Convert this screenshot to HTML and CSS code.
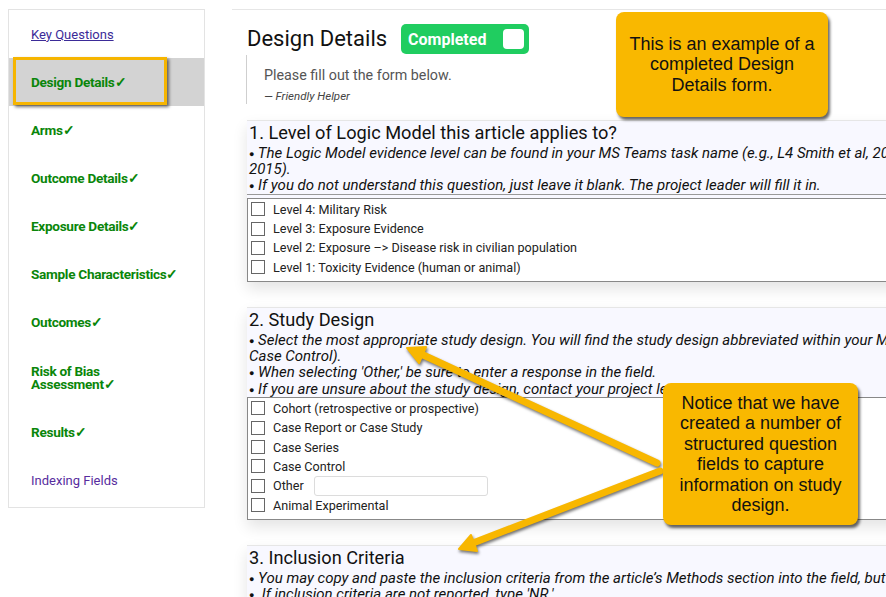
FILE: index.html
```html
<!DOCTYPE html>
<html lang="en">
<head>
<meta charset="utf-8">
<title>Design Details</title>
<link rel="stylesheet" href="styles.css">
</head>
<body>
<div class="page">
  <nav class="sidebar">
    <a class="nav-item nav-link" href="#">Key Questions</a>
    <a class="nav-item nav-done nav-active" href="#">Design Details✓</a>
    <a class="nav-item nav-done" href="#">Arms✓</a>
    <a class="nav-item nav-done" href="#">Outcome Details✓</a>
    <a class="nav-item nav-done" href="#">Exposure Details✓</a>
    <a class="nav-item nav-done" href="#">Sample Characteristics✓</a>
    <a class="nav-item nav-done" href="#">Outcomes✓</a>
    <a class="nav-item nav-done nav-two-line" href="#">Risk of Bias Assessment✓</a>
    <a class="nav-item nav-done" href="#">Results✓</a>
    <a class="nav-item nav-plain" href="#">Indexing Fields</a>
  </nav>

  <main class="main">
    <div class="title-row">
      <h1 class="title">Design Details</h1>
      <div class="badge">Completed<span class="badge-box"></span></div>
    </div>
    <blockquote class="helper">
      <p class="helper-text">Please fill out the form below.</p>
      <p class="helper-cite">— Friendly Helper</p>
    </blockquote>

    <section class="q">
      <div class="q-head q-head--ruled">
        <h2 class="q-title">1. Level of Logic Model this article applies to?</h2>
        <p class="q-note"><span class="dot">●</span> The Logic Model evidence level can be found in your MS Teams task name (e.g., L4 Smith et al, 2015 or L2 Jones et al,<br>2015).</p>
        <p class="q-note"><span class="dot">●</span> If you do not understand this question, just leave it blank. The project leader will fill it in.</p>
      </div>
      <div class="q-opts q-opts--gap">
        <label class="opt"><span class="cb"></span>Level 4: Military Risk</label>
        <label class="opt"><span class="cb"></span>Level 3: Exposure Evidence</label>
        <label class="opt"><span class="cb"></span>Level 2: Exposure –&gt; Disease risk in civilian population</label>
        <label class="opt"><span class="cb"></span>Level 1: Toxicity Evidence (human or animal)</label>
      </div>
    </section>

    <section class="q">
      <div class="q-head">
        <h2 class="q-title">2. Study Design</h2>
        <p class="q-note"><span class="dot">●</span> Select the most appropriate study design. You will find the study design abbreviated within your MS Teams task name (e.g., Cohort or<br>Case Control).</p>
        <p class="q-note"><span class="dot">●</span> When selecting 'Other,' be sure to enter a response in the field.</p>
        <p class="q-note"><span class="dot">●</span> If you are unsure about the study design, contact your project leader.</p>
      </div>
      <div class="q-opts">
        <label class="opt"><span class="cb"></span>Cohort (retrospective or prospective)</label>
        <label class="opt"><span class="cb"></span>Case Report or Case Study</label>
        <label class="opt"><span class="cb"></span>Case Series</label>
        <label class="opt"><span class="cb"></span>Case Control</label>
        <label class="opt"><span class="cb"></span>Other<span class="other-input"></span></label>
        <label class="opt"><span class="cb"></span>Animal Experimental</label>
      </div>
    </section>

    <section class="q">
      <div class="q-head">
        <h2 class="q-title">3. Inclusion Criteria</h2>
        <p class="q-note"><span class="dot">●</span> You may copy and paste the inclusion criteria from the article’s Methods section into the field, but please shorten where possible.</p>
        <p class="q-note"><span class="dot">●</span>&nbsp; If inclusion criteria are not reported, type 'NR.'</p>
      </div>
    </section>
  </main>
</div>

<svg class="arrows" width="886" height="597" viewBox="0 0 886 597" aria-hidden="true">
  <g class="arrow-group">
    <path d="M657 463 L421 354" class="arrow-line"/>
    <polygon points="407,348 426,347 419,363" class="arrow-head"/>
    <path d="M660 471 L473 543" class="arrow-line"/>
    <polygon points="459,549 471,535 477,551" class="arrow-head"/>
  </g>
</svg>

<div class="callout callout-1">This is an example of a completed Design Details form.</div>
<div class="callout callout-2">Notice that we have created a number of structured question fields to capture information on study design.</div>
</body>
</html>
```

FILE: styles.css
```css
html, body {
  margin: 0;
  padding: 0;
  overflow: hidden;
  width: 886px;
  height: 597px;
  background: #ffffff;
  font-family: Roboto, "Liberation Sans", Arial, sans-serif;
  color: #111;
}

.page {
  display: flex;
  align-items: flex-start;
  gap: 27px;
  padding: 9px 0 0 8px;
  width: 1200px;
}

/* Sidebar */
.sidebar {
  flex: 0 0 197px;
  box-sizing: border-box;
  border: 1px solid #e3e3e3;
  background: #fff;
  display: flex;
  flex-direction: column;
  padding-bottom: 2px;
}

.nav-item {
  display: block;
  padding: 17.5px 22px 17.5px 22px;
  font-size: 13px;
  line-height: 13px;
  height: 13px;
  text-decoration: none;
}

.nav-link {
  color: #3b2b98;
  text-decoration: underline;
}

.nav-plain {
  color: #572d9e;
}

.nav-done {
  color: #0a860a;
  font-weight: 700;
  font-size: 13.6px;
  letter-spacing: -0.3px;
}

.nav-two-line {
  padding-top: 19px;
  height: 26px;
  line-height: 12.5px;
}

.nav-active {
  background: #d3d3d3;
  position: relative;
}

.nav-active::after {
  content: "";
  position: absolute;
  left: 4px;
  top: -1px;
  width: 154px;
  height: 48px;
  box-sizing: border-box;
  border: 3px solid #f6b500;
  box-shadow: 2px 2px 3px rgba(0, 0, 0, 0.55);
}

/* Main */
.main {
  flex: 0 0 900px;
  border-top: 1px solid #e6e6e6;
  padding-left: 15px;
  box-sizing: border-box;
  display: flex;
  flex-direction: column;
}

.title-row {
  display: flex;
  align-items: center;
  gap: 14px;
  margin-top: 14px;
  height: 30px;
}

.title {
  margin: 0;
  font-size: 22px;
  font-weight: 400;
  line-height: 30px;
  color: #111;
}

.badge {
  display: flex;
  align-items: center;
  height: 30px;
  box-sizing: border-box;
  padding: 0 5px 0 7px;
  border-radius: 5px;
  background: #20cd60;
  color: #fff;
  font-size: 16px;
  font-weight: 700;
  gap: 15px;
  width: 128px;
}

.badge-box {
  width: 21px;
  height: 20px;
  background: #fff;
  border-radius: 4px;
  margin-left: auto;
}

.helper {
  margin: 1px 0 0 -1px;
  border-left: 1px solid #cfcfcf;
  padding: 10px 0 0 17px;
  height: 49px;
  box-sizing: border-box;
}

.helper-text {
  margin: 0;
  font-size: 14.3px;
  line-height: 20px;
  color: #555;
}

.helper-cite {
  margin: 3px 0 0;
  font-size: 11.5px;
  line-height: 16px;
  font-style: italic;
  color: #444;
}

/* Question sections */
.q {
  margin-top: 16px;
  border-top: 1px solid #e6e6e6;
  background: #f8f8ff;
  box-shadow: 0 7px 14px rgba(0, 0, 0, 0.11);
}

.q + .q {
  margin-top: 25px;
}

.q-head {
  padding: 0 2px;
}

.q-head--ruled {
  border-bottom: 1px solid #999;
}

.q-title {
  margin: 0;
  font-size: 18.2px;
  font-weight: 400;
  line-height: 24px;
  color: #111;
}

.q-note {
  margin: 0;
  font-size: 15px;
  line-height: 16.2px;
  font-style: italic;
  color: #111;
  white-space: nowrap;
}

.dot {
  font-style: normal;
  font-size: 9px;
  line-height: 0;
  position: relative;
  top: -1px;
}

.q-opts {
  background: #fff;
  border: 1px solid #888;
  padding: 1px 0 4px 3px;
  display: flex;
  flex-direction: column;
}

.q-opts--gap {
  margin-top: 3px;
}

.opt {
  display: flex;
  align-items: center;
  height: 19.33px;
  font-size: 12.6px;
  color: #222;
}

.cb {
  width: 12px;
  height: 12px;
  border: 1px solid #666;
  background: #fff;
  margin-right: 8px;
  flex: 0 0 auto;
}

.other-input {
  width: 174px;
  height: 20px;
  box-sizing: border-box;
  border: 1px solid #dcdcdc;
  border-radius: 3px;
  background: #fff;
  margin-left: 10px;
}

/* Overlays */
.arrows {
  position: absolute;
  left: 0;
  top: 0;
  pointer-events: none;
}

.arrow-group {
  filter: drop-shadow(1.5px 2px 1.5px rgba(0, 0, 0, 0.55));
}

.arrow-line {
  stroke: #f8b700;
  stroke-width: 7;
  stroke-linecap: round;
  fill: none;
}

.arrow-head {
  fill: #f8b700;
  stroke: #f8b700;
  stroke-width: 2;
  stroke-linejoin: round;
}

.callout {
  position: absolute;
  box-sizing: border-box;
  display: flex;
  align-items: center;
  justify-content: center;
  text-align: center;
  background: #f9b800;
  border-radius: 8px;
  box-shadow: 2px 3px 3px rgba(0, 0, 0, 0.6);
  font-family: "Liberation Sans", Arial, sans-serif;
  font-size: 18px;
  line-height: 20.5px;
  color: #111;
}

.callout-1 {
  left: 616px;
  top: 12px;
  width: 212px;
  height: 105px;
  padding: 0 8px;
}

.callout-2 {
  left: 663px;
  top: 383px;
  width: 195px;
  height: 142px;
  padding: 0 8px;
}
```
